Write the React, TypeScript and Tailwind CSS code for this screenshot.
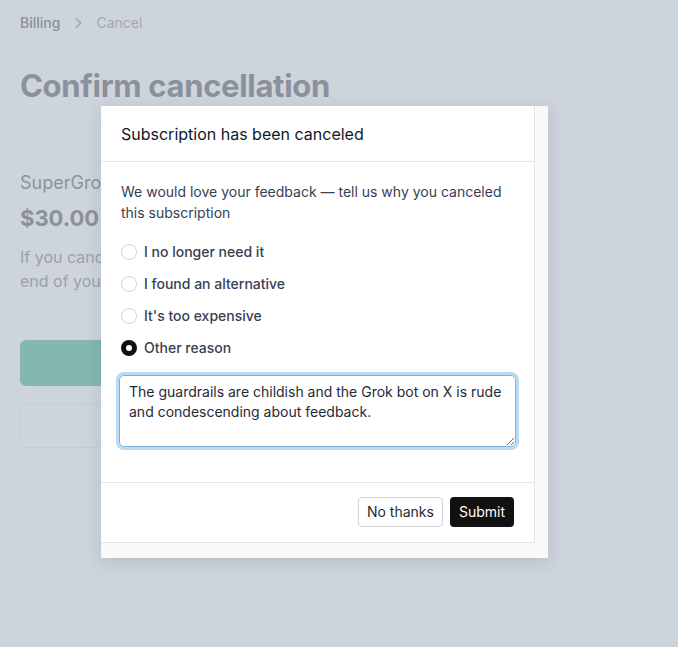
import React from 'react'

const reasons = [
  'I no longer need it',
  'I found an alternative',
  "It's too expensive",
  'Other reason',
]

function Radio({ checked }: { checked: boolean }) {
  return checked ? (
    <span className="flex h-4 w-4 shrink-0 items-center justify-center rounded-full bg-[#111111]">
      <span className="h-[6px] w-[6px] rounded-full bg-white" />
    </span>
  ) : (
    <span className="h-4 w-4 shrink-0 rounded-full border border-[#d4d4d8] bg-white" />
  )
}

export default function App() {
  const [selected, setSelected] = React.useState(3)

  return (
    <div
      className="relative min-h-screen bg-[#ced4dc] px-5 py-[13px]"
      style={{ fontFamily: 'Inter, "Noto Sans", sans-serif' }}
    >
      {/* Page behind the dialog */}
      <nav className="flex items-center text-sm">
        <span className="font-medium text-[#8a909a]">Billing</span>
        <svg
          className="mx-[10px] h-4 w-4 text-[#979ca5]"
          viewBox="0 0 24 24"
          fill="none"
          stroke="currentColor"
          strokeWidth="1.6"
          strokeLinecap="round"
          strokeLinejoin="round"
        >
          <path d="m9 5 7 7-7 7" />
        </svg>
        <span className="text-[#a3a8b0]">Cancel</span>
      </nav>

      <h1 className="mt-[35px] text-[31px] leading-9 font-bold tracking-[-0.01em] text-[#8b919b]">
        Confirm cancellation
      </h1>

      <div className="mt-[65px] text-lg text-[#8d939c]">SuperGrok</div>
      <div className="mt-[7px] text-[22px] leading-7 font-bold text-[#8b919b]">$30.00 / month</div>
      <p className="mt-[13px] text-base leading-6 text-[#9ba1aa]">
        If you cancel, you will keep access to SuperGrok until the
        <br />
        end of your current billing period.
      </p>

      <div className="mt-[47px] flex max-w-[480px] flex-col gap-[17px]">
        <div className="h-[46px] rounded-md bg-[#84b8ae]" />
        <div className="h-[45px] rounded-md border border-[#c6ccd4]" />
      </div>

      {/* Dialog */}
      <div className="absolute top-[106px] left-[101px] w-[447px] bg-[#f9f9f9] pr-[13px] pb-[15px] shadow-[0_4px_16px_rgba(15,23,42,0.12)]">
        <div className="border-r border-b border-[#e5e5e5] bg-white">
          <div className="border-b border-[#e5e7eb] px-5 pt-4 pb-[15px] text-base leading-6 text-[#111827]">
            Subscription has been canceled
          </div>

          <div className="px-5 pt-[19px] pb-[35px]">
            <p className="text-sm leading-[21px] text-[#374151]">
              We would love your feedback — tell us why you canceled this subscription
            </p>

            <div className="mt-[19px] flex flex-col gap-3">
              {reasons.map((r, i) => (
                <label
                  key={r}
                  className="flex h-5 cursor-pointer items-center gap-[7px] text-sm font-medium text-[#374151]"
                  onClick={() => setSelected(i)}
                >
                  <Radio checked={selected === i} />
                  {r}
                </label>
              ))}
            </div>

            <textarea
              className="mt-[17px] -ml-[2px] block h-[72px] w-[397px] resize-y rounded-[5px] border border-[#7fb3dc] px-[9px] py-[6px] text-sm leading-5 text-[#1f2937] outline-none ring-[3px] ring-[#b9dbf2]"
              defaultValue="The guardrails are childish and the Grok bot on X is rude and condescending about feedback."
            />
          </div>

          <div className="flex justify-end gap-[7px] border-t border-[#e5e7eb] px-5 pt-[14px] pb-[15px]">
            <button className="h-[30px] rounded-[4px] border border-[#d4d4d8] bg-white px-2 text-sm text-[#1f2937]">
              No thanks
            </button>
            <button className="h-[30px] rounded-[4px] bg-[#111111] px-[9px] text-sm text-white">
              Submit
            </button>
          </div>
        </div>
      </div>
    </div>
  )
}
